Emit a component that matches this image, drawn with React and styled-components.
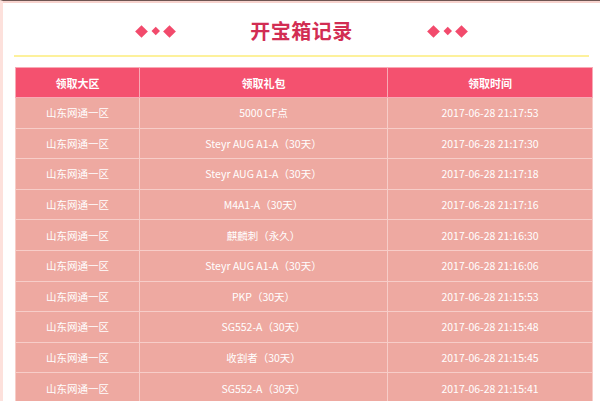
import React from "react";
import styled, { createGlobalStyle } from "styled-components";

const GlobalStyle = createGlobalStyle`
  html, body { margin: 0; padding: 0; background: #fff; }
  body { font-family: "Noto Sans CJK SC", "Noto Sans", sans-serif; }
  * { box-sizing: border-box; }
`;

const Frame = styled.div`
  height: 401px;
  overflow: hidden;
  border-top: 1px solid #6e5552;
  border-left: 3px solid #fde1dc;
  box-shadow: inset 0 2px 0 #f7d3ce;
  padding: 0 8px 0 12px;
  background: #fff;
`;

const TitleBar = styled.div`
  height: 56px;
  padding-top: 6px;
  margin-right: 3px;
  margin-left: -1px;
  border-bottom: 2px solid #fdf19c;
  display: flex;
  align-items: center;
  justify-content: center;
  gap: 76px;
`;

const Title = styled.h1`
  margin: 0;
  font-size: 20px;
  font-weight: 700;
  color: #d22d53;
  letter-spacing: 0.5px;
  line-height: 1;
`;

const Diamonds = styled.div`
  display: flex;
  align-items: center;
  gap: 6px;
`;

const Diamond = styled.span`
  display: block;
  width: ${(p) => (p.$small ? 5.5 : 9)}px;
  height: ${(p) => (p.$small ? 5.5 : 9)}px;
  background: #f24a6c;
  transform: rotate(45deg);
  margin: 0 ${(p) => (p.$small ? 1 : 0)}px;
`;

const Table = styled.table`
  margin-top: 10px;
  width: 577px;
  border-collapse: collapse;
  table-layout: fixed;
  border: 1px solid #f8b5bd;
`;

const HeadCell = styled.th`
  height: 30px;
  padding: 0;
  background: #f4516f;
  color: #fff;
  font-size: 11px;
  font-weight: 700;
  text-align: center;
  border: 1px solid #f8aab5;
`;

const Row = styled.tr`
  height: 30.6px;
`;

const Cell = styled.td`
  padding: 0;
  background: #eea9a1;
  color: #fff;
  font-size: 10.5px;
  text-align: center;
  border: 1px solid #f7cdc8;
  white-space: nowrap;
`;

const records = [
  ["山东网通一区", "5000 CF点", "2017-06-28 21:17:53"],
  ["山东网通一区", "Steyr AUG A1-A（30天）", "2017-06-28 21:17:30"],
  ["山东网通一区", "Steyr AUG A1-A（30天）", "2017-06-28 21:17:18"],
  ["山东网通一区", "M4A1-A（30天）", "2017-06-28 21:17:16"],
  ["山东网通一区", "麒麟刺（永久）", "2017-06-28 21:16:30"],
  ["山东网通一区", "Steyr AUG A1-A（30天）", "2017-06-28 21:16:06"],
  ["山东网通一区", "PKP（30天）", "2017-06-28 21:15:53"],
  ["山东网通一区", "SG552-A（30天）", "2017-06-28 21:15:48"],
  ["山东网通一区", "收割者（30天）", "2017-06-28 21:15:45"],
  ["山东网通一区", "SG552-A（30天）", "2017-06-28 21:15:41"],
];

function DiamondGroup() {
  return (
    <Diamonds>
      <Diamond />
      <Diamond $small />
      <Diamond />
    </Diamonds>
  );
}

export default function App() {
  return (
    <>
      <GlobalStyle />
      <Frame>
        <TitleBar>
          <DiamondGroup />
          <Title>开宝箱记录</Title>
          <DiamondGroup />
        </TitleBar>
        <Table>
          <colgroup>
            <col style={{ width: 124 }} />
            <col style={{ width: 248 }} />
            <col style={{ width: 205 }} />
          </colgroup>
          <thead>
            <tr>
              <HeadCell>领取大区</HeadCell>
              <HeadCell>领取礼包</HeadCell>
              <HeadCell>领取时间</HeadCell>
            </tr>
          </thead>
          <tbody>
            {records.map((r, i) => (
              <Row key={i}>
                <Cell>{r[0]}</Cell>
                <Cell>{r[1]}</Cell>
                <Cell>{r[2]}</Cell>
              </Row>
            ))}
          </tbody>
        </Table>
      </Frame>
    </>
  );
}
